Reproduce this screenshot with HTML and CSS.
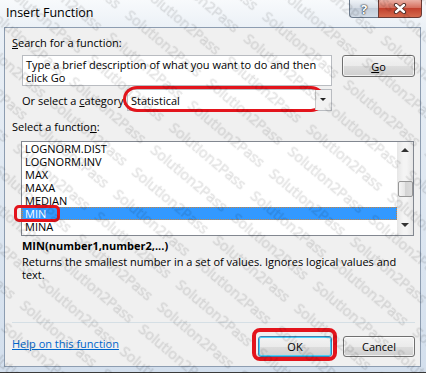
FILE: index.html
```html
<!DOCTYPE html>
<html lang="en">
<head>
  <meta charset="UTF-8">
  <title>Insert Function</title>
  <link rel="stylesheet" href="styles.css">
</head>
<body>
  <div class="window">
    <div class="titlebar">
      <span class="title">Insert Function</span>
      <div class="caption">
        <span class="cap cap-help">?</span>
        <span class="cap cap-close">
          <svg width="16" height="11" viewBox="0 0 16 11">
            <path d="M4 2 L12 9 M12 2 L4 9" stroke="#4b2a25" stroke-width="4.2" stroke-linecap="round"/>
            <path d="M4 2 L12 9 M12 2 L4 9" stroke="#fff" stroke-width="2.4" stroke-linecap="round"/>
          </svg>
        </span>
      </div>
    </div>

    <div class="client">
      <div class="label"><u>S</u>earch for a function:</div>
      <div class="search-row">
        <div class="search-box">Type a brief description of what you want to do and then click Go</div>
        <div class="btn btn-go"><u>G</u>o</div>
      </div>

      <div class="category-row">
        <span class="cat-label">Or select a <u>c</u>ategory:</span>
        <div class="select mark-cat">
          <span class="select-value">Statistical</span>
          <span class="drop"></span>
        </div>
      </div>

      <div class="label label-fn">Select a functio<u>n</u>:</div>
      <div class="listbox">
        <ul class="items">
          <li>LOGNORM.DIST</li>
          <li>LOGNORM.INV</li>
          <li>MAX</li>
          <li>MAXA</li>
          <li>MEDIAN</li>
          <li class="selected">MIN</li>
          <li>MINA</li>
        </ul>
        <div class="scrollbar">
          <span class="arrow arrow-up"></span>
          <span class="thumb"></span>
          <span class="arrow arrow-down"></span>
        </div>
      </div>

      <div class="signature">MIN(number1,number2,...)</div>
      <p class="desc">Returns the smallest number in a set of values. Ignores logical values and text.</p>

      <hr class="sep">

      <div class="footer">
        <a class="help-link" href="#">Help on this function</a>
        <div class="buttons">
          <div class="btn btn-ok">OK</div>
          <div class="btn btn-cancel">Cancel</div>
        </div>
      </div>
    </div>

    <svg class="watermark" width="426" height="373">
      <defs>
        <pattern id="wm" width="106" height="29" patternUnits="userSpaceOnUse" patternTransform="rotate(40)">
          <text x="0" y="20" class="wm-text">Solution2Pass</text>
        </pattern>
      </defs>
      <rect width="426" height="373" fill="url(#wm)"/>
    </svg>
  </div>
</body>
</html>
```

FILE: styles.css
```css
*, *::before, *::after { box-sizing: border-box; }

body {
  margin: 0;
  font-family: "Open Sans", sans-serif;
  font-size: 11px;
  color: #000;
}

.window {
  position: relative;
  width: 426px;
  height: 373px;
  overflow: hidden;
  background: linear-gradient(#f8fafc, #eaf0f6 30px, #d3dfed);
  box-shadow: inset 0 -1px 0 #3b3b3b;
}

/* title bar */
.titlebar {
  height: 27px;
  display: flex;
  justify-content: space-between;
  align-items: flex-start;
}

.title {
  padding: 5px 0 0 6px;
  font-size: 12.5px;
  line-height: 15px;
}

.caption {
  display: flex;
  margin-right: 4px;
}

.cap {
  height: 18px;
  display: flex;
  align-items: center;
  justify-content: center;
}

.cap-help {
  width: 29px;
  border: 1px solid #6b7a8c;
  border-top: none;
  border-right: none;
  border-radius: 0 0 0 4px;
  background: linear-gradient(#eef2f6, #d6dde6 45%, #c3cdd9 50%, #d3dce7);
  color: #fff;
  font-weight: bold;
  font-size: 13px;
  text-shadow: 0 0 1px #2c3440, 0 0 1px #2c3440, 0 0 2px #2c3440;
}

.cap-close {
  width: 44px;
  border: 1px solid #6b3a34;
  border-top: none;
  border-radius: 0 0 4px 0;
  background: linear-gradient(#eab0a5, #d6705f 45%, #c2412e 50%, #d56a4e);
}

/* dialog body */
.client {
  height: 340px;
  margin: 0 5px 0 4px;
  border: 1px solid #8d9db1;
  background: #f0f0f0;
  padding: 7px 5px 0 7px;
}

.label {
  line-height: 15px;
}

.search-row {
  display: flex;
  align-items: flex-start;
  gap: 10px;
  margin-top: 5px;
  padding-left: 10px;
}

.search-box {
  width: 310px;
  height: 31px;
  border: 1px solid #b9bcc1;
  background: #fff;
  padding: 2px 3px;
  line-height: 13px;
}

.btn {
  display: flex;
  align-items: center;
  justify-content: center;
  border: 1px solid #707070;
  border-radius: 3px;
  background: linear-gradient(#f3f3f3, #ebebeb 50%, #dddddd 50%, #cfcfcf);
  box-shadow: inset 0 0 0 1px rgba(255,255,255,0.7);
}

.btn-go {
  width: 73px;
  height: 22px;
}

.category-row {
  display: flex;
  align-items: center;
  height: 22px;
  margin-top: 3px;
  padding-left: 10px;
}

.cat-label {
  width: 105px;
}

.select {
  position: relative;
  display: flex;
  width: 205px;
  height: 22px;
  border: 1px solid #b9bcc1;
  background: #fff;
}

.select-value {
  flex: 1;
  padding: 3px 0 0 3px;
}

.drop {
  position: relative;
  width: 16px;
  border-left: 1px solid #c8c8c8;
  background: #f2f2f2;
}

.drop::after {
  content: "";
  position: absolute;
  left: 4px;
  top: 8px;
  border: 3px solid transparent;
  border-top: 3px solid #222;
}

.label-fn {
  margin-top: 8px;
}

.listbox {
  display: flex;
  width: 393px;
  height: 95px;
  margin: 7px 0 0 9px;
  border: 1px solid #828790;
  background: #fff;
}

.items {
  flex: 1;
  list-style: none;
  margin: 0;
  padding: 0;
}

.items li {
  position: relative;
  height: 13px;
  line-height: 13px;
  padding-left: 3px;
}

.items li.selected {
  background: #3399ff;
  color: #fff;
  outline: 1px dotted #c9843c;
  outline-offset: -1px;
}

.scrollbar {
  width: 16px;
  display: flex;
  flex-direction: column;
  align-items: center;
  background: linear-gradient(90deg, #e6e6e6, #f4f4f4 40%, #f4f4f4 60%, #e6e6e6);
}

.arrow {
  position: relative;
  width: 16px;
  height: 17px;
}

.arrow::after {
  content: "";
  position: absolute;
  left: 4px;
  border: 4px solid transparent;
}

.arrow-up::after {
  top: 2px;
  border-bottom: 4px solid #333;
}

.arrow-down {
  margin-top: auto;
}

.arrow-down::after {
  top: 5px;
  border-top: 4px solid #333;
}

.thumb {
  width: 15px;
  height: 16px;
  margin-top: 22px;
  border: 1px solid #979797;
  border-radius: 2px;
  background: linear-gradient(90deg, #f5f5f5, #e4e4e4 50%, #d4d4d4 50%, #dcdcdc);
}

.signature {
  font-weight: bold;
  line-height: 15px;
  margin-top: 2px;
  padding-left: 10px;
}

.desc {
  width: 395px;
  margin: 3px 0 0;
  padding-left: 10px;
  line-height: 12.5px;
}

.sep {
  height: 1px;
  margin: 41px 0 0;
  border: 0;
  background: #d5dfe5;
}

.footer {
  display: flex;
  justify-content: space-between;
  align-items: flex-start;
  margin-top: 13px;
}

.help-link {
  line-height: 15px;
  color: #0066cc;
}

.buttons {
  display: flex;
  gap: 11px;
}

.btn-ok {
  position: relative;
  width: 74px;
  height: 21px;
  border-color: #3c7fb1;
  box-shadow: inset 0 0 0 1px #48d1f9;
}

.btn-cancel {
  width: 72px;
  height: 21px;
}

/* red annotations drawn over the dialog */
.mark-cat::before,
.items li.selected::after,
.btn-ok::after {
  content: "";
  position: absolute;
  border: 3px solid #e3141c;
  pointer-events: none;
}

.mark-cat::before {
  left: -5px;
  top: -4px;
  width: 202px;
  height: 26px;
  border-width: 3.5px;
  border-radius: 14px / 13px;
}

.items li.selected::after {
  left: -8px;
  top: -2px;
  width: 46px;
  height: 17px;
  border-radius: 5px;
}

.btn-ok::after {
  left: -7px;
  top: -9px;
  width: 85px;
  height: 33px;
  border-width: 4px;
  border-radius: 8px;
}

.watermark {
  position: absolute;
  left: 0;
  top: 0;
  pointer-events: none;
}

.wm-text {
  font-family: "Open Sans", sans-serif;
  font-size: 14.5px;
  fill: rgba(0,0,0,0.06);
  stroke: rgba(0,0,0,0.09);
  stroke-width: 0.7;
}
```
